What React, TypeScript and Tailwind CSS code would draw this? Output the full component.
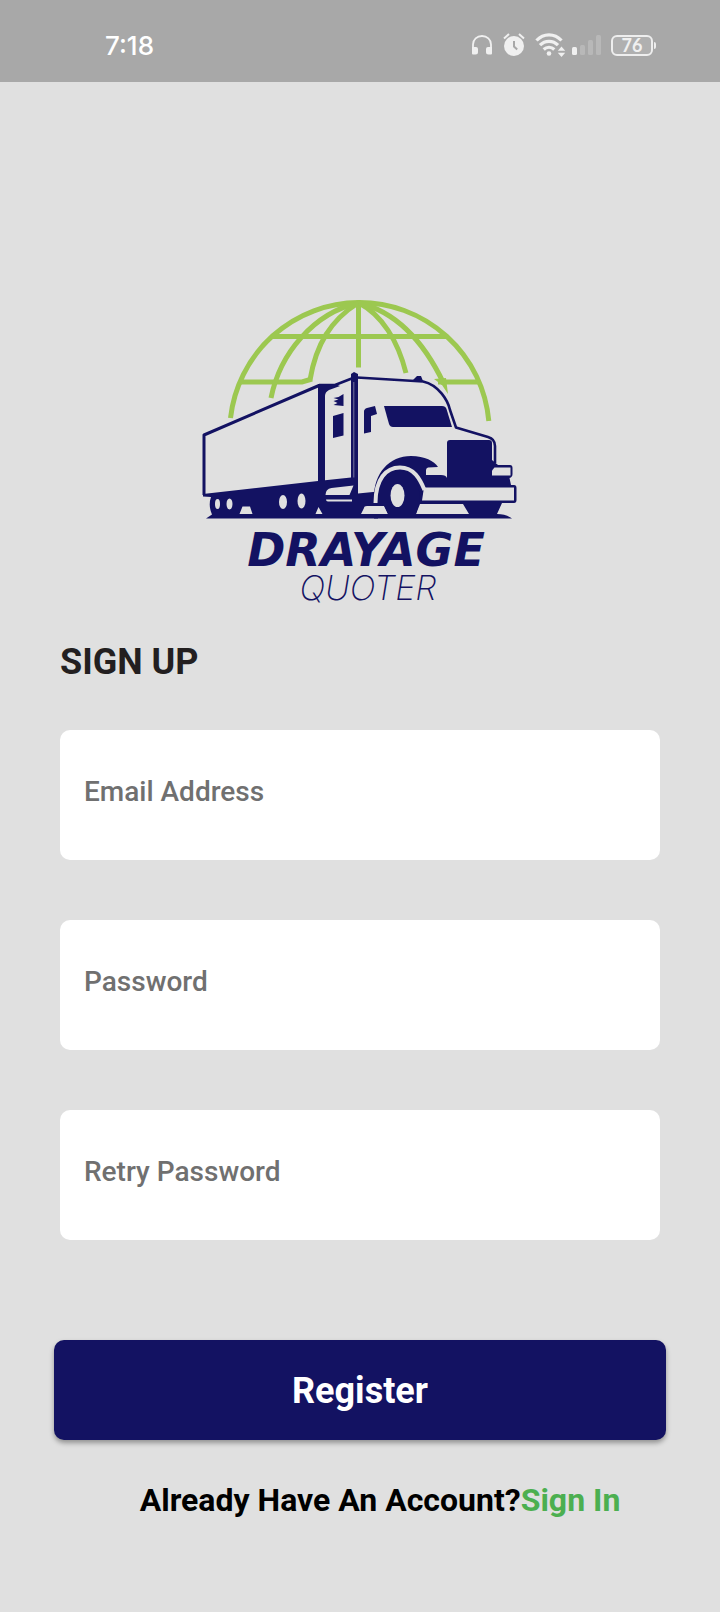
import { useState } from "react";

function HeadphonesIcon() {
  return (
    <svg className="h-5 w-5" viewBox="0 0 20 20" fill="none" aria-hidden="true">
      <path d="M1 15V9.500C1 4.500 5 1 10 1s9 3.500 9 8.500V15" stroke="#f0f0f0" strokeWidth="1.800" />
      <path d="M0 12h4a2 2 0 0 1 2 2v3a2.500 2.500 0 0 1-2.500 2.500H1a1 1 0 0 1-1-1zM20 12h-4a2 2 0 0 0-2 2v3a2.500 2.500 0 0 0 2.500 2.500H19a1 1 0 0 0 1-1z" fill="#f0f0f0" />
    </svg>
  );
}

function AlarmIcon() {
  return (
    <svg className="h-6 w-[22px]" viewBox="0 0 22 24" fill="none" aria-hidden="true">
      <circle cx="11" cy="13" r="10" fill="#f0f0f0" />
      <path d="M1 5.500 6 1M21 5.500 16 1" stroke="#f0f0f0" strokeWidth="2" />
      <path d="M11 8v5.500l3.200 3" stroke="#a8a8a8" strokeWidth="2" />
    </svg>
  );
}

function WifiIcon() {
  return (
    <svg className="h-6 w-[31px]" viewBox="0 0 31 24" fill="none" aria-hidden="true">
      <g stroke="#f0f0f0" strokeWidth="3.200">
        <path d="M1.500 7.500C8.500 0 19.500 0 26.500 7.500" />
        <path d="M5 12.200c5-5.200 13-5.200 18 0" />
        <path d="M8.700 16.500c3-3 7.600-3 10.600 0" />
      </g>
      <circle cx="14" cy="20.500" r="2.300" fill="#f0f0f0" />
      <path d="m26.500 13.500 3.700 4.300h-7.400zM26.500 24l-3.700-4.300h7.400z" fill="#f0f0f0" />
    </svg>
  );
}

function SignalIcon() {
  return (
    <svg className="h-5 w-[29px]" viewBox="0 0 29 20" aria-hidden="true">
      <rect y="12" width="5" height="8" rx="1.500" fill="#f0f0f0" />
      <g fill="#b8b8b8">
        <rect x="8" y="10" width="5" height="10" rx="1.500" />
        <rect x="16" y="5" width="5" height="15" rx="1.500" />
        <rect x="24" width="5" height="20" rx="1.500" />
      </g>
    </svg>
  );
}

function StatusBar() {
  return (
    <header className="flex h-[82px] items-center justify-between bg-[#a8a8a8] pr-16 pl-[105px] pt-2">
      <span className="font-[Inter,sans-serif] text-[26px] font-medium text-white">7:18</span>
      <div className="flex items-center">
        <HeadphonesIcon />
        <span className="ml-[11px]"><AlarmIcon /></span>
        <span className="ml-[10px]"><WifiIcon /></span>
        <span className="ml-1.5"><SignalIcon /></span>
        <div className="ml-[10px] flex items-center gap-px">
          <div className="flex h-[21px] w-[42px] items-center justify-center rounded-md border-2 border-[#eeeeee] bg-[#b0b0b0] font-[Lato,sans-serif] text-lg leading-none font-bold text-[#f0f0f0]">
            76
          </div>
          <div className="h-[7px] w-0.5 rounded-r-sm bg-[#eeeeee]" />
        </div>
      </div>
    </header>
  );
}

function TruckArt() {
  const light = "#e0e0e0";
  const navy = "#131262";
  return (
    <svg className="h-[222px] w-[316px]" viewBox="202 298 316 222" fill="none" role="img" aria-label="Truck in front of a globe">
      <g stroke="#9cc850" strokeWidth="5">
        <path d="M230.500 418A130 130 0 0 1 358.500 302.500A130 130 0 0 1 488.800 421" />
        <path d="M358.500 301V367.500M271 336.500H447M240 382H302L312 379M438 382H478" />
        <path d="M358 303C314 313 280 353 271 398" />
        <path d="M358 303C331 320 316 344 310 380" />
        <path d="M359 303C382 315 398 341 406 373" />
        <path d="M359 303C397 312 425 344 444 384" />
      </g>
      <path d="M434 379l12-1 2 16-6-9z" fill="#9cc850" />

      <g stroke={navy} strokeWidth="3" strokeLinejoin="round">
        <path d="M204 495V435L319 385.500" />
        <path d="M319 385H335L353 378" strokeWidth="2.600" />
        <path d="M357 377.500 423 381.500C439 385 448 401 450 410L456 427.500 488 437Q495 439 495 446V463" strokeWidth="2.600" />
      </g>
      <path d="M318 384h17l5 2-11 4q-4 2-4 6v87h-7z" fill={navy} />
      <path d="M351 374l3-2 4 2v109h-7z" fill={navy} />
      <path d="M353.800 382v98" stroke="#77769f" strokeWidth="1" />
      <path d="M343.500 394v12l-10-1 4-2-4-2 5-1.500-5-1.500 5-1zM333 416l10.500-3v22.500L333 438z" fill={navy} />
      <path d="M364 411.500q0-2.500 3-3.500l8-2 2 8-6 2v16l-7 1.500z" fill={navy} />
      <path d="M384 406h58q3.500 0 4.500 3l5.500 18h-59q-3 0-4-3z" fill={navy} />
      <path d="M413 380l4-4h4l2 5z" fill={navy} />

      <path d="M203 494l115-13 33-3.500h7v16l20-2v27H206l6-4q-4-9-1-17.500l-8-.500z" fill={navy} />
      <path d="M374 503C372 475 388 456 411 456C425 456 434 461 438 467L428 467.500Q426 468 426 470V475H441Q446 475 447 478V443Q447 440 450 440H489Q492 440 492 443V460L498 465H510Q512.500 465 512.500 468V474Q512.500 477 509.500 478L511 485H514Q516.500 485 516.500 488V500Q516.500 503 514 503H502L497 514Q506 514 512 518.500H374z" fill={navy} />
      <path d="M494.500 467.500h16v8h-18.500v-5z" fill={light} />
      <path d="M424 487.500h90v13h-92z" fill={light} />
      <path d="M375.500 503C375.500 479 386 467.500 400 467.500C414 467.500 420 479 424.500 490" stroke={light} strokeWidth="4" />
      <path d="M364 508q0-2 3-2h17l4 8h-27zM420 504h43l6 10h-53z" fill={light} />
      <path d="M378 505C378 482 387 471 399 471C411 471 420 482 420 500L416 514H388L384 505z" fill={navy} />
      <ellipse cx="397.500" cy="495.500" rx="7" ry="11.500" fill={light} />
      <path d="M325.500 495q0-6 6-7l22-2.500-4 9.500zM326 499.500h26v2h-24q-2 0-2-2zM318.500 507l4 7h-7zM242.500 506.500h7.500l2.500 7.500h-13z" fill={light} />
      <g fill={light}>
        <ellipse cx="217.500" cy="504" rx="2.500" ry="5" />
        <ellipse cx="229.500" cy="504" rx="3" ry="5.500" />
        <ellipse cx="283" cy="502" rx="4" ry="7" />
        <ellipse cx="301.500" cy="501" rx="4" ry="7.500" />
      </g>
    </svg>
  );
}

function Logo() {
  return (
    <div className="flex flex-col items-center text-[#131262] italic">
      <TruckArt />
      <p className="mt-2 pl-3 font-[DejaVu_Sans,sans-serif] text-[46px] leading-11 font-bold">DRAYAGE</p>
      <p className="pl-4 font-[Inter,sans-serif] text-[34px] leading-8 font-extralight">QUOTER</p>
    </div>
  );
}

type FieldProps = { name: string; label: string; type: string };

function Field({ name, label, type }: FieldProps) {
  const [value, setValue] = useState("");
  return (
    <input
      name={name}
      type={type}
      aria-label={label}
      placeholder={label}
      value={value}
      onChange={(e) => setValue(e.target.value)}
      className="block h-[130px] w-full rounded-[10px] bg-white px-6 pb-2 text-[28px] font-medium text-[#231f20] placeholder:text-[#707070]"
    />
  );
}

export default function App() {
  return (
    <div className="min-h-screen bg-[#e0e0e0] font-[Roboto,sans-serif]">
      <StatusBar />
      <main className="px-[54px] pt-[216px] pb-20">
        <Logo />
        <form onSubmit={(e) => e.preventDefault()}>
          <div className="px-1.5">
            <h1 className="mt-[38px] text-4xl font-bold text-[#231f20]">SIGN UP</h1>
            <div className="mt-12 flex flex-col gap-15">
              <Field name="email" label="Email Address" type="email" />
              <Field name="password" label="Password" type="password" />
              <Field name="retry-password" label="Retry Password" type="password" />
            </div>
          </div>
          <button
            type="submit"
            className="mt-25 block h-25 w-full rounded-[10px] bg-[#131262] pt-0.5 text-4xl font-bold text-white shadow-[0_3px_5px_rgba(0,0,0,0.35)]"
          >
            Register
          </button>
        </form>
        <p className="mt-10 pl-10 text-center text-[32px] leading-10 font-bold text-black">
          Already Have An Account?
          <a href="#sign-in" className="text-[#4caf50]">Sign In</a>
        </p>
      </main>
    </div>
  );
}
